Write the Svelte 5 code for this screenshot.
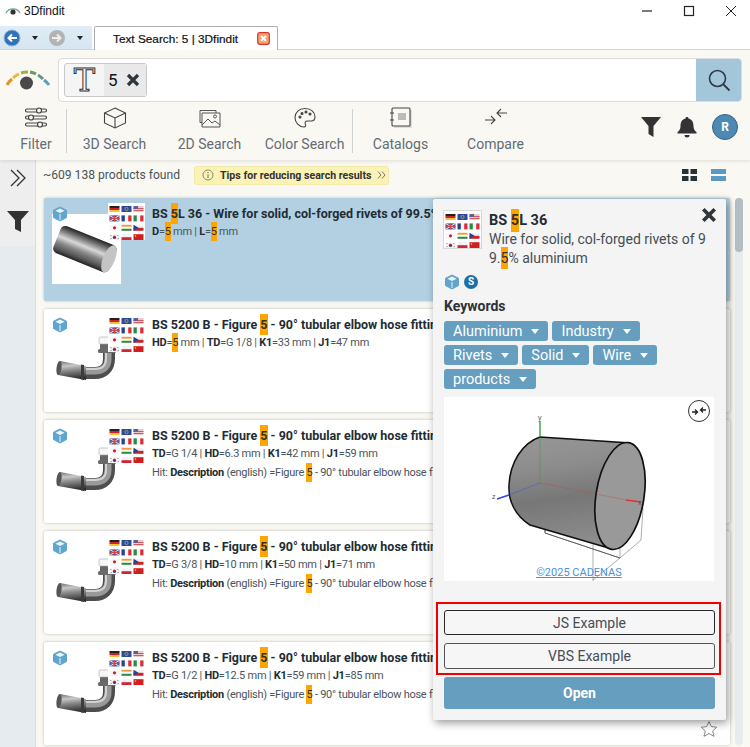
<script>
  const flagRows = ['de', 'eu', 'us', 'gb', 'fr', 'it', 'jp', 'in', 'cz', 'kr', 'pl', 'cn'];

  const results = [
    { id: 1, before: 'BS 5200 B - Figure ', after: ' - 90° tubular elbow hose fittings', specs: [['HD', '=', '5', ' mm'], ['TD', '=G 1/8'], ['K1', '=33 mm'], ['J1', '=47 mm']], hit: false },
    { id: 2, before: 'BS 5200 B - Figure ', after: ' - 90° tubular elbow hose fittings', specs: [['TD', '=G 1/4'], ['HD', '=6.3 mm'], ['K1', '=42 mm'], ['J1', '=59 mm']], hit: true },
    { id: 3, before: 'BS 5200 B - Figure ', after: ' - 90° tubular elbow hose fittings', specs: [['TD', '=G 3/8'], ['HD', '=10 mm'], ['K1', '=50 mm'], ['J1', '=71 mm']], hit: true },
    { id: 4, before: 'BS 5200 B - Figure ', after: ' - 90° tubular elbow hose fittings', specs: [['TD', '=G 1/2'], ['HD', '=12.5 mm'], ['K1', '=59 mm'], ['J1', '=85 mm']], hit: true }
  ];

  const keywordRows = [['Aluminium', 'Industry'], ['Rivets', 'Solid', 'Wire'], ['products']];
</script>

{#snippet flag(code, x, y)}
  <g transform="translate({x} {y})">
    {#if code === 'de'}
      <rect width="10" height="2" fill="#222" /><rect y="2" width="10" height="2" fill="#c8242b" /><rect y="4" width="10" height="2" fill="#f2c230" />
    {:else if code === 'eu'}
      <rect width="10" height="6" fill="#2b4a9c" /><circle cx="5" cy="3" r="1.6" fill="none" stroke="#e6cf4e" stroke-width=".6" />
    {:else if code === 'us'}
      <rect width="10" height="6" fill="#e9c9c9" /><rect y="2" width="10" height="1" fill="#c95b5b" /><rect y="4" width="10" height="1" fill="#c95b5b" /><rect width="4.5" height="3" fill="#56609a" />
    {:else if code === 'gb'}
      <rect width="10" height="6" fill="#4a5a9a" /><path d="M0 0l10 6M10 0L0 6" stroke="#eee" stroke-width="1" /><path d="M5 0v6M0 3h10" stroke="#d0444c" stroke-width="1.4" />
    {:else if code === 'fr'}
      <rect width="3.4" height="6" fill="#27408f" /><rect x="3.4" width="3.3" height="6" fill="#f4f4f4" /><rect x="6.7" width="3.3" height="6" fill="#d8303a" />
    {:else if code === 'it'}
      <rect width="3.4" height="6" fill="#2c8a48" /><rect x="3.4" width="3.3" height="6" fill="#f4f4f4" /><rect x="6.7" width="3.3" height="6" fill="#d8303a" />
    {:else if code === 'jp'}
      <rect width="10" height="6" fill="#f7f7f7" /><circle cx="5" cy="3" r="1.6" fill="#c8242b" />
    {:else if code === 'in'}
      <rect width="10" height="2" fill="#ee9a3a" /><rect y="2" width="10" height="2" fill="#f7f7f7" /><rect y="4" width="10" height="2" fill="#2d8a3f" />
    {:else if code === 'cz'}
      <rect width="10" height="3" fill="#f2f2f2" /><rect y="3" width="10" height="3" fill="#c8242b" /><path d="M0 0l5 3-5 3z" fill="#27408f" />
    {:else if code === 'kr'}
      <rect width="10" height="6" fill="#f7f7f7" /><circle cx="5" cy="3" r="1.6" fill="#c8242b" /><path d="M3.4 3a1.6 1.6 0 0 0 3.2 0z" fill="#27408f" /><path d="M1 1l1 1M8 1l1 1M1 5l1-1M8 5l1-1" stroke="#333" stroke-width=".7" />
    {:else if code === 'pl'}
      <rect width="10" height="3" fill="#f2f2f2" /><rect y="3" width="10" height="3" fill="#d0243a" />
    {:else}
      <rect width="10" height="6" fill="#cf1f1f" /><circle cx="2" cy="1.8" r=".8" fill="#f0d040" />
    {/if}
  </g>
{/snippet}

{#snippet flags(cls)}
  <svg class={cls} viewBox="0 0 37 37" width="37" height="37">
    <rect width="37" height="37" fill="#fff" />
    {#each flagRows as code, i}
      {@render flag(code, 1.5 + (i % 3) * 12, 3 + Math.floor(i / 3) * 9.4)}
    {/each}
  </svg>
{/snippet}

{#snippet cube(cls)}
  <svg class={cls} viewBox="0 0 16 16" width="16" height="16">
    <path d="M8 1l6.5 3.2v7.4L8 15l-6.5-3.4V4.2z" fill="#5fa5cd" stroke="#5fa5cd" stroke-linejoin="round" />
    <path d="M8 2.6l4.6 2.2L8 7 3.4 4.8z" fill="#eaf4fa" />
    <path d="M8 8v6" stroke="#eaf4fa" stroke-width="1" />
  </svg>
{/snippet}

{#snippet cross(size)}
  <svg viewBox="0 0 14 14" width={size} height={size}>
    <path d="M2 2l10 10M12 2L2 12" stroke="#2f353a" stroke-width="3.2" />
  </svg>
{/snippet}

{#snippet elbow()}
  <svg class="part" viewBox="0 0 80 58" width="80" height="58">
    <defs>
      <linearGradient id="tube" x1="0" y1="0" x2=".15" y2="1">
        <stop offset="0" stop-color="#6c6c6c" /><stop offset=".3" stop-color="#c8c8c8" /><stop offset=".55" stop-color="#8a8a8a" /><stop offset="1" stop-color="#2e2e2e" />
      </linearGradient>
    </defs>
    <rect x="46" y="14" width="14" height="8" rx="1" fill="#666" />
    <rect x="45" y="9" width="16" height="7" rx="1.5" fill="#f6f6f6" stroke="#aaa" stroke-width=".6" />
    <rect x="44" y="21" width="18" height="4" rx="1.500" fill="#6a6a6a" />
    <path d="M55 25v6c0 9-6 14-14 14H27" stroke="#4e4e4e" stroke-width="12" fill="none" />
    <path d="M54 25v6c0 8-5 12-13 12H27" stroke="#999" stroke-width="7" fill="none" />
    <path d="M52 25v6c0 7-4 10-11 10H27" stroke="#d2d2d2" stroke-width="2" fill="none" />
    <path d="M6 33L32 38v14L4 47z" fill="url(#tube)" />
    <ellipse cx="5" cy="40" rx="2.500" ry="7" fill="#555" transform="rotate(8 5 40)" />
    <path d="M27 36.500l3 .6v15l-3-.7z" fill="#3c3c3c" />
  </svg>
{/snippet}

<div class="window">
  <header class="titlebar">
    <svg class="app-logo" viewBox="0 0 16 10" width="16" height="10">
      <path d="M1 7a8 8 0 0 1 14 0" fill="none" stroke="#6aa5a0" stroke-width="1.4" />
      <circle cx="8" cy="6" r="2.6" fill="#333" />
    </svg>
    <span class="app-name">3Dfindit</span>
    <div class="window-btns">
      <svg viewBox="0 0 12 12" width="12" height="12"><path d="M1 6h10" stroke="#222" stroke-width="1.2" /></svg>
      <svg viewBox="0 0 12 12" width="12" height="12"><rect x="1.5" y="1.5" width="9" height="9" fill="none" stroke="#222" stroke-width="1.2" /></svg>
      <svg viewBox="0 0 12 12" width="12" height="12"><path d="M1 1l10 10M11 1L1 11" stroke="#222" stroke-width="1" /></svg>
    </div>
  </header>

  <div class="tabbar">
    <nav class="nav-btns">
      <svg viewBox="0 0 18 18" width="18" height="18">
        <circle cx="9" cy="9" r="8" fill="#2f74bb" stroke="#8cb6dd" />
        <path d="M14 9H6M9 5.5L5.5 9 9 12.5" fill="none" stroke="#fff" stroke-width="2" />
      </svg>
      <span class="caret"></span>
      <svg viewBox="0 0 18 18" width="18" height="18">
        <circle cx="9" cy="9" r="8" fill="#b3b3b3" />
        <path d="M4 9h8M9 5.5L12.5 9 9 12.5" fill="none" stroke="#eee" stroke-width="2" />
      </svg>
      <span class="caret"></span>
    </nav>
    <div class="tab">
      <span>Text Search: 5 | 3Dfindit</span>
      <svg viewBox="0 0 13 13" width="13" height="13">
        <rect x=".7" y=".7" width="11.6" height="11.6" rx="2" fill="#f2a46b" stroke="#d8352a" stroke-width="1.2" />
        <path d="M4 4l5 5M9 4L4 9" stroke="#fff" stroke-width="1.8" />
      </svg>
    </div>
  </div>

  <section class="toolbar">
    <div class="search-row">
      <svg class="gauge" viewBox="0 0 46 24" width="46" height="24">
        <path d="M2 19A21 21 0 0 1 7 13" stroke="#e8912c" stroke-width="3" fill="none" />
        <path d="M8 12a21 21 0 0 1 6-4" stroke="#e3b93c" stroke-width="3" fill="none" />
        <path d="M16 7a21 21 0 0 1 7-1" stroke="#a6ac48" stroke-width="3" fill="none" />
        <path d="M25 6a21 21 0 0 1 6 2" stroke="#6d9a5a" stroke-width="3" fill="none" />
        <path d="M33 9a21 21 0 0 1 5 4" stroke="#5a9a88" stroke-width="3" fill="none" />
        <path d="M39 14a21 21 0 0 1 5 5" stroke="#5a9fc0" stroke-width="3" fill="none" />
        <circle cx="21.500" cy="17" r="6.500" fill="#4a4a4a" />
      </svg>
      <div class="search-box">
        <div class="chip">
          <span class="chip-type">T</span>
          <span class="chip-value">5 {@render cross(14)}</span>
        </div>
        <button class="search-btn" aria-label="Search">
          <svg viewBox="0 0 24 24" width="24" height="24">
            <circle cx="10.5" cy="10.5" r="8" fill="none" stroke="#2c3a44" stroke-width="1.6" />
            <path d="M16.5 16.5l6 6" stroke="#2c3a44" stroke-width="1.8" />
          </svg>
        </button>
      </div>
    </div>

    <div class="tools">
      <div class="tool tool-filter">
        <svg viewBox="0 0 24 22" width="24" height="22" fill="none" stroke="#444" stroke-width="1.2">
          <rect x="1.5" y="2" width="21" height="3" rx="1.5" /><rect x="1.5" y="9" width="21" height="3" rx="1.5" /><rect x="1.5" y="16" width="21" height="3" rx="1.5" />
          <circle cx="15" cy="3.5" r="2.5" fill="#faf8f3" /><circle cx="7" cy="10.5" r="2.5" fill="#faf8f3" /><circle cx="16" cy="17.5" r="2.5" fill="#faf8f3" />
        </svg>
        <span>Filter</span>
      </div>
      <i class="divider"></i>
      <div class="tool">
        <svg viewBox="0 0 24 22" width="24" height="22" fill="none" stroke="#444" stroke-width="1.1">
          <path d="M12 1l10.5 5v10L12 21 1.500 16V6z" /><path d="M1.500 6L12 11l10.500-5M12 11v10" />
        </svg>
        <span>3D Search</span>
      </div>
      <div class="tool">
        <svg viewBox="0 0 24 22" width="24" height="22" fill="none" stroke="#555" stroke-width="1">
          <path d="M2 3.500h16v12H2z" /><path d="M4 6h18v14H4z" fill="#faf8f3" /><path d="M4 18l6-6 4 4 3-2 5 4" /><circle cx="17" cy="9.500" r="1.500" />
        </svg>
        <span>2D Search</span>
      </div>
      <div class="tool">
        <svg viewBox="0 0 24 22" width="24" height="22" fill="none" stroke="#444" stroke-width="1.1">
          <path d="M12 1.500C6 1.500 2 5.500 2 10.500s4 9.500 9 9.500c2 0 2-2 1.300-3-.8-1.500.2-3 2-3h3.700c2.500 0 4-1.800 4-4C22 5 18 1.500 12 1.500z" />
          <circle cx="7" cy="10" r="1" fill="#444" /><circle cx="9" cy="6.500" r="1" fill="#444" /><circle cx="13" cy="5" r="1" fill="#444" /><circle cx="17" cy="7" r="1" fill="#444" />
        </svg>
        <span>Color Search</span>
      </div>
      <i class="divider"></i>
      <div class="tool">
        <svg viewBox="0 0 24 22" width="24" height="22" fill="none" stroke="#444" stroke-width="1.1">
          <rect x="5" y="3" width="18" height="18" fill="#ddd" stroke="none" />
          <rect x="3" y="1" width="18" height="18" rx="1" fill="#faf8f3" />
          <rect x="9" y="6" width="8" height="7" fill="#bbb" stroke="none" />
          <path d="M1 6h4M1 13h4" />
        </svg>
        <span>Catalogs</span>
      </div>
      <div class="tool">
        <svg viewBox="0 0 24 22" width="24" height="22" fill="none" stroke="#444" stroke-width="1.1">
          <path d="M1 13h10M7 9l4 4-4 4M23 6H13M17 2l-4 4 4 4" />
        </svg>
        <span>Compare</span>
      </div>
      <div class="tool-actions">
        <svg viewBox="0 0 22 22" width="22" height="22"><path d="M1 1h20l-7.500 9v11l-5-3v-8z" fill="#333" /></svg>
        <svg viewBox="0 0 20 22" width="20" height="22"><path d="M10 1c1 0 1.500.6 1.500 1.400C15 3.200 16.500 6 16.500 10c0 3 1 4.600 3 6v1.500H.5V16c2-1.400 3-3 3-6 0-4 1.500-6.800 5-7.600C8.500 1.600 9 1 10 1z" fill="#333" /><path d="M7.500 19h5a2.500 2.500 0 0 1-5 0z" fill="#333" /></svg>
        <span class="avatar">R</span>
      </div>
    </div>
  </section>

  <main class="body">
    <aside class="sidebar">
      <div class="side-expand">
        <svg viewBox="0 0 18 18" width="18" height="18" fill="none" stroke="#333" stroke-width="1.300">
          <path d="M2 1l8 8-8 8M8 1l8 8-8 8" />
        </svg>
      </div>
      <div class="side-filter">
        <svg viewBox="0 0 24 24" width="24" height="24"><path d="M1 2h22l-8 9v12l-6-3v-9z" fill="#333" /></svg>
      </div>
    </aside>

    <div class="content">
      <div class="result-head">
        <span class="found">~609 138 products found</span>
        <span class="tips">
          <svg viewBox="0 0 12 12" width="12" height="12"><circle cx="6" cy="6" r="5" fill="none" stroke="#8a8a6a" /><path d="M6 5.300v3.500M6 3v1.200" stroke="#6a6a50" /></svg>
          <b>Tips for reducing search results</b>
          <svg class="tips-more" viewBox="0 0 10 8" width="10" height="8" fill="none" stroke="#777" stroke-width="1"><path d="M1 .5L4 4 1 7.500M5 .5L8 4 5 7.500" /></svg>
        </span>
        <div class="views">
          <svg viewBox="0 0 15 12" width="15" height="12"><path d="M0 0h6.500v5H0zM8.500 0H15v5H8.500zM0 7h6.500v5H0zM8.500 7H15v5H8.500z" fill="#263238" /></svg>
          <svg viewBox="0 0 15 12" width="15" height="12"><path d="M0 0h15v5H0zM0 7h15v5H0z" fill="#5c9ac4" /></svg>
        </div>
      </div>

      <div class="list-wrap">
        <div class="list">
          <article class="card card-active">
            <div class="thumb">
              <div class="thumb-white">
                <svg class="pin" viewBox="0 0 69 70" width="69" height="70">
                  <defs>
                    <linearGradient id="pin" x1="0" y1="0" x2="0" y2="1">
                      <stop offset="0" stop-color="#222" /><stop offset=".2" stop-color="#777" /><stop offset=".42" stop-color="#d8d8d8" /><stop offset=".62" stop-color="#8a8a8a" /><stop offset=".85" stop-color="#555" /><stop offset="1" stop-color="#222" />
                    </linearGradient>
                  </defs>
                  <g transform="rotate(22 34 35)">
                    <rect x="3" y="21" width="60" height="29" rx="5" fill="url(#pin)" />
                    <ellipse cx="59" cy="35.500" rx="6" ry="14.500" fill="#c4c4c4" />
                  </g>
                </svg>
              </div>
              {@render cube('cube')}
              {@render flags('flags')}
            </div>
            <div class="info">
              <h3>BS <mark>5</mark>L 36 - Wire for solid, col-forged rivets of 99.5% aluminium</h3>
              <p class="specs"><b>D</b>=<mark>5</mark> mm | <b>L</b>=<mark>5</mark> mm</p>
            </div>
          </article>

          {#each results as item (item.id)}
            <article class="card">
              <div class="thumb">
                {@render elbow()}
                {@render cube('cube')}
                {@render flags('flags')}
              </div>
              <div class="info">
                <h3>{item.before}<mark>5</mark>{item.after}</h3>
                <p class="specs">
                  {#each item.specs as spec, i}
                    {#if i > 0}{' | '}{/if}<b>{spec[0]}</b>{spec[1]}{#if spec[2]}<mark>{spec[2]}</mark>{spec[3]}{/if}
                  {/each}
                </p>
                {#if item.hit}
                  <p class="hit">Hit: <b>Description</b> (english) =Figure <mark>5</mark> - 90° tubular elbow hose fittings</p>
                {/if}
              </div>
            </article>
          {/each}
        </div>
        <div class="scrollbar"><span class="scroll-thumb"></span></div>
      </div>
    </div>
  </main>

  <svg class="star" viewBox="0 0 18 18" width="18" height="18">
    <path d="M9 1.500l2.300 5.100 5.500.6-4.100 3.700 1.200 5.400L9 13.500l-4.900 2.800 1.200-5.400L1.200 7.200l5.500-.6z" fill="none" stroke="#888" />
  </svg>

  <aside class="popup">
    <button class="popup-close" aria-label="Close">{@render cross(16)}</button>
    <div class="popup-head">
      {@render flags('popup-flags')}
      <div>
        <h2>BS <mark>5</mark>L 36</h2>
        <p>Wire for solid, col-forged rivets of 9<br />9.<mark>5</mark>% aluminium</p>
      </div>
    </div>
    <div class="popup-icons">
      {@render cube('')}
      <span class="s-badge">S</span>
    </div>
    <h4>Keywords</h4>
    <div class="keywords">
      {#each keywordRows as row}
        <div class="keyword-row">
          {#each row as word}
            <span class="keyword">{word}<i></i></span>
          {/each}
        </div>
      {/each}
    </div>
    <div class="preview">
      <span class="compare-round">
        <svg viewBox="0 0 14 10" width="14" height="10" fill="none" stroke="#222" stroke-width="1.300"><path d="M0 6h5.500M3 3.500L5.500 6 3 8.500M14 4H8.500M11 1.500L8.500 4l2.500 2.500" /></svg>
      </span>
      <svg class="model" viewBox="0 0 270 184" width="270" height="184">
        <defs>
          <linearGradient id="body" x1="0" y1="0" x2=".15" y2="1">
            <stop offset="0" stop-color="#979797" /><stop offset=".3" stop-color="#8d8d8d" /><stop offset=".6" stop-color="#777" /><stop offset="1" stop-color="#8c8c8c" />
          </linearGradient>
        </defs>
        <path d="M149 145v39M176 161l-27 22M176 151v10l21-18 2-32M101 126v10l75 25" stroke="#999" stroke-width=".8" fill="none" />
        <path d="M101 128v8l75 25" stroke="#555" stroke-width=".9" fill="none" />
        <path d="M96 40L186 46L168 152L86 128C70 118 64 102 65 88C66 66 78 46 96 40z" fill="url(#body)" stroke="#111" stroke-width="1.500" />
        <path d="M96 40v46" stroke="#3a9a3a" stroke-width=".7" opacity=".7" />
        <path d="M96 86L65 98" stroke="#3a5ad0" stroke-width=".7" opacity=".7" />
        <path d="M96 86l55 11" stroke="#c05050" stroke-width=".7" opacity=".7" />
        <ellipse cx="176" cy="99" rx="24" ry="54" transform="rotate(9 176 99)" fill="#999" stroke="#111" stroke-width="1.700" />
        <path d="M152 97l30 6" stroke="#c05050" stroke-width=".7" opacity=".6" />
        <path d="M96 40V24" stroke="#2a9a2a" stroke-width="1.300" />
        <path d="M65 98l-12 4" stroke="#2a4ad8" stroke-width="1.500" />
        <path d="M182 103l15 2" stroke="#e03030" stroke-width="1.500" />
        <text x="94" y="23" class="axis">y</text>
        <text x="48" y="102" class="axis">z</text>
        <text x="194" y="108" class="axis">x</text>
      </svg>
      <span class="copyright">©2025 CADENAS</span>
    </div>
    <div class="example-box">
      <button class="example">JS Example</button>
      <button class="example example-vbs">VBS Example</button>
    </div>
    <button class="open">Open</button>
  </aside>
</div>

<style>
  :global(body) {
    background: #faf8f3;
  }
  .window {
    position: relative;
    width: 750px;
    height: 747px;
    overflow: hidden;
    display: flex;
    flex-direction: column;
    font-family: Roboto, 'Noto Sans', sans-serif;
    color: #37424a;
    background: #faf8f3;
  }

  .titlebar {
    height: 26px;
    flex: none;
    display: flex;
    align-items: center;
    padding: 0 0 4px 5px;
    background: #fff;
    box-sizing: border-box;
  }
  .app-name {
    margin-left: 3px;
    font-size: 12px;
    font-family: 'Liberation Sans', sans-serif;
    color: #111;
  }
  .window-btns {
    margin-left: auto;
    width: 109px;
    padding-right: 13px;
    box-sizing: border-box;
    display: flex;
    justify-content: space-between;
  }
  .tabbar {
    height: 24px;
    flex: none;
    display: flex;
    align-items: flex-end;
    background: #fff;
    border-bottom: 1px solid #d4d6d6;
    box-sizing: border-box;
  }
  .nav-btns {
    width: 92px;
    height: 23px;
    display: flex;
    align-items: center;
    padding-left: 3px;
    box-sizing: border-box;
    background: linear-gradient(#e0edf6, #d5e5f1);
  }
  .caret {
    width: 0;
    height: 0;
    border: 3.500px solid transparent;
    border-top: 4px solid #222;
    border-bottom: 0;
    margin: 0 9.500px 0 11px;
    flex: none;
  }
  .tab {
    width: 184px;
    height: 24px;
    margin-left: 2px;
    margin-bottom: -1px;
    box-sizing: border-box;
    padding: 0 7px 0 18px;
    display: flex;
    align-items: center;
    justify-content: space-between;
    background: #fff;
    border: 1px solid #aab0b4;
    border-bottom: 0;
    border-radius: 2px 2px 0 0;
    font-family: 'Liberation Sans', sans-serif;
    font-size: 11.800px;
    color: #111;
    -webkit-text-stroke: 0.2px #111;
  }

  .toolbar {
    height: 110px;
    flex: none;
    box-shadow: 0 2px 3px rgba(0, 0, 0, 0.08);
    position: relative;
  }
  .search-row {
    display: flex;
    align-items: center;
    padding: 8px 8px 0 5px;
  }
  .gauge {
    flex: none;
    margin-right: 7px;
    margin-bottom: 4px;
  }
  .search-box {
    flex: 1;
    height: 44px;
    display: flex;
    align-items: center;
    background: #fff;
    border: 1px solid #dcdcdc;
    border-radius: 4px;
    padding-left: 5px;
    box-sizing: border-box;
  }
  .chip {
    display: flex;
    align-items: stretch;
    height: 34px;
    border: 1px solid #c9c9c9;
    border-radius: 3px;
    background: #f5f5f5;
    box-sizing: border-box;
  }
  .chip-type {
    width: 39px;
    text-align: center;
    font: 32px/32px 'DejaVu Serif', serif;
    color: #f5f5f5;
    -webkit-text-stroke: 1px #333;
  }
  .chip-value {
    width: 42px;
    padding-left: 4px;
    box-sizing: border-box;
    display: flex;
    align-items: center;
    gap: 8px;
    background: #e9e9e9;
    font-size: 17px;
    color: #111;
  }
  .search-btn {
    margin-left: auto;
    width: 45px;
    height: 42px;
    border: 0;
    padding: 0;
    background: #a3c6da;
    border-radius: 0 3px 3px 0;
    display: flex;
    align-items: center;
    justify-content: center;
  }

  .tools {
    position: relative;
    height: 50px;
    margin-top: 5px;
    display: flex;
    align-items: flex-start;
    color: #626c74;
  }
  .tool {
    width: 95px;
    display: flex;
    flex-direction: column;
    align-items: center;
    gap: 5px;
    font-size: 14px;
    line-height: 20px;
    flex: none;
  }
  .tool-filter {
    width: 60px;
    margin-left: 6px;
  }
  .divider {
    width: 1px;
    height: 44px;
    margin-top: 2px;
    background: #cfd2d2;
    flex: none;
  }
  .tool-actions {
    margin-left: auto;
    margin-top: 7px;
    padding-right: 12px;
    display: flex;
    align-items: center;
    gap: 15px;
  }
  .avatar {
    width: 26px;
    height: 26px;
    border-radius: 50%;
    background: #4e89b4;
    border: 1px solid #2e6287;
    box-sizing: border-box;
    color: #fff;
    font-size: 12px;
    font-weight: 700;
    text-align: center;
    line-height: 24px;
  }

  .body {
    flex: 1;
    display: flex;
    min-height: 0;
  }
  .sidebar {
    width: 36px;
    flex: none;
    background: #e6ebef;
    border-right: 1px solid #d8dcdf;
    box-sizing: border-box;
  }
  .side-expand {
    height: 36px;
    background: #eeeeee;
    display: flex;
    align-items: center;
    justify-content: center;
  }
  .side-filter {
    height: 50px;
    background: #eeeeee;
    display: flex;
    align-items: center;
    justify-content: center;
  }
  .content {
    flex: 1;
    min-width: 0;
    display: flex;
    flex-direction: column;
  }
  .result-head {
    height: 28px;
    flex: none;
    display: flex;
    align-items: center;
    padding: 0 24px 0 7px;
    margin-top: 1px;
    font-size: 12.100px;
  }
  .found {
    color: #4a545c;
    width: 151px;
    flex: none;
    white-space: nowrap;
  }
  .tips {
    width: 195px;
    height: 19px;
    box-sizing: border-box;
    display: flex;
    align-items: center;
    gap: 6px;
    padding: 0 4px 0 7px;
    background: #fbf2b6;
    border: 1px solid #f3e9a8;
    border-radius: 3px;
    font-size: 10.600px;
    color: #333;
    white-space: nowrap;
  }
  .tips svg {
    flex: none;
  }
  .tips .tips-more {
    margin-left: auto;
  }
  .views {
    margin-left: auto;
    display: flex;
    gap: 14px;
  }
  .list-wrap {
    flex: 1;
    display: flex;
    min-height: 0;
    padding-left: 8px;
    padding-top: 9px;
    gap: 5px;
  }
  .list {
    width: 686px;
    flex: none;
    display: flex;
    flex-direction: column;
    gap: 8px;
  }
  .scrollbar {
    width: 8px;
    flex: none;
    height: 547px;
    background: #e8ecef;
    border-radius: 4px;
  }
  .scroll-thumb {
    display: block;
    height: 54px;
    background: #b4bcc4;
    border-radius: 4px;
  }
  .card {
    height: 103px;
    flex: none;
    display: flex;
    background: #fff;
    border-radius: 2px;
    box-shadow: 0 0 3px rgba(0, 0, 0, 0.25);
    box-sizing: border-box;
    overflow: hidden;
  }
  .card-active {
    background: #b2d0e2;
  }
  .thumb {
    position: relative;
    width: 108px;
    flex: none;
  }
  .thumb-white {
    position: absolute;
    left: 8px;
    top: 16px;
    width: 69px;
    height: 70px;
    background: #fff;
  }
  .pin {
    position: absolute;
    left: 0;
    top: 0;
  }
  .part {
    position: absolute;
    left: 10px;
    top: 19px;
  }
  .thumb :global(.cube) {
    position: absolute;
    left: 8px;
    top: 8px;
  }
  .thumb :global(.flags) {
    position: absolute;
    left: 64px;
    top: 5px;
  }
  .card:not(.card-active) .thumb :global(.flags) {
    top: 6px;
  }
  .info {
    width: 281px;
    padding-top: 7px;
    overflow: hidden;
    white-space: nowrap;
  }
  h3 {
    margin: 0;
    font-size: 12.500px;
    line-height: 18px;
    font-weight: 700;
    color: #222c33;
  }
  .specs {
    margin: 0;
    font-size: 11px;
    letter-spacing: -0.260px;
    line-height: 17px;
    color: #4a545c;
  }
  .specs b {
    color: #222c33;
  }
  .hit {
    margin: 2px 0 0;
    font-size: 11px;
    letter-spacing: -0.260px;
    line-height: 18px;
    color: #4a545c;
  }
  .hit b {
    color: #222c33;
  }
  mark {
    background: #ffa500;
    color: #33302a;
    padding: 3px 0;
  }

  .star {
    position: absolute;
    left: 700px;
    top: 720px;
  }

  .popup {
    position: absolute;
    left: 433px;
    top: 199px;
    width: 293px;
    height: 521px;
    box-sizing: border-box;
    padding: 12px 11px 0;
    background: #f4f4f4;
    border-radius: 2px;
    box-shadow: 2px 3px 8px rgba(0, 0, 0, 0.4);
  }
  .popup-close {
    position: absolute;
    top: 7px;
    right: 7px;
    border: 0;
    background: none;
    padding: 0;
    width: 20px;
    height: 20px;
  }
  .popup-head {
    display: flex;
    gap: 8px;
  }
  :global(.popup-flags) {
    flex: none;
    outline: 1px solid #d8d8d8;
  }
  h2 {
    margin: 0;
    font-size: 14.500px;
    line-height: 19px;
    font-weight: 700;
    color: #222c33;
  }
  .popup-head p {
    margin: 0;
    font-size: 14px;
    line-height: 18.500px;
    color: #444e56;
    white-space: nowrap;
  }
  .popup-icons {
    display: flex;
    align-items: center;
    gap: 4px;
    margin-top: 7px;
    height: 16px;
  }
  .s-badge {
    width: 14px;
    height: 14px;
    border-radius: 50%;
    background: #1d6fa8;
    color: #fff;
    font-size: 10px;
    font-weight: 700;
    line-height: 14px;
    text-align: center;
  }
  h4 {
    margin: 6px 0 5px;
    font-size: 14px;
    line-height: 20px;
    font-weight: 700;
    color: #2b3238;
  }
  .keywords {
    display: flex;
    flex-direction: column;
    gap: 4px;
  }
  .keyword-row {
    display: flex;
    gap: 4px;
  }
  .keyword {
    display: flex;
    align-items: center;
    gap: 9px;
    height: 20px;
    padding: 0 9px;
    background: #659ebe;
    border-radius: 3px;
    color: #fff;
    font-size: 14.500px;
  }
  .keyword i {
    width: 0;
    height: 0;
    border: 4.500px solid transparent;
    border-top: 5px solid #fff;
    border-bottom: 0;
  }
  .preview {
    position: relative;
    margin-top: 8px;
    width: 270px;
    height: 184px;
    background: #fff;
  }
  .model {
    position: absolute;
    left: 0;
    top: 0;
  }
  .axis {
    font-size: 7px;
    fill: #555;
    font-family: 'Liberation Sans', sans-serif;
  }
  .compare-round {
    position: absolute;
    z-index: 1;
    right: 4px;
    top: 3px;
    width: 22px;
    height: 22px;
    box-sizing: border-box;
    border: 1px solid #333;
    border-radius: 50%;
    background: #fff;
    display: flex;
    align-items: center;
    justify-content: center;
  }
  .copyright {
    position: absolute;
    left: 0;
    right: 0;
    bottom: 1px;
    text-align: center;
    font-size: 11px;
    line-height: 14px;
    color: #4a90d9;
    text-decoration: underline;
  }
  .example-box {
    margin: 21px -6px 0 -8px;
    padding: 6px 4px 5px 6px;
    height: 73px;
    box-sizing: border-box;
    border: 2px solid #f00000;
    display: flex;
    flex-direction: column;
    gap: 8px;
  }
  .example {
    height: 25px;
    flex: none;
    background: #f6f6f6;
    border: 1px solid #23282d;
    border-radius: 3px;
    font: 14px Roboto, sans-serif;
    color: #444e56;
    padding: 0 0 0 20px;
  }
  .example-vbs {
    border-color: #555;
    height: 26px;
  }
  .open {
    display: block;
    width: 100%;
    height: 32px;
    margin-top: 2px;
    background: #659ebe;
    border: 0;
    border-radius: 3px;
    color: #fff;
    font: 700 14px Roboto, sans-serif;
  }
</style>
